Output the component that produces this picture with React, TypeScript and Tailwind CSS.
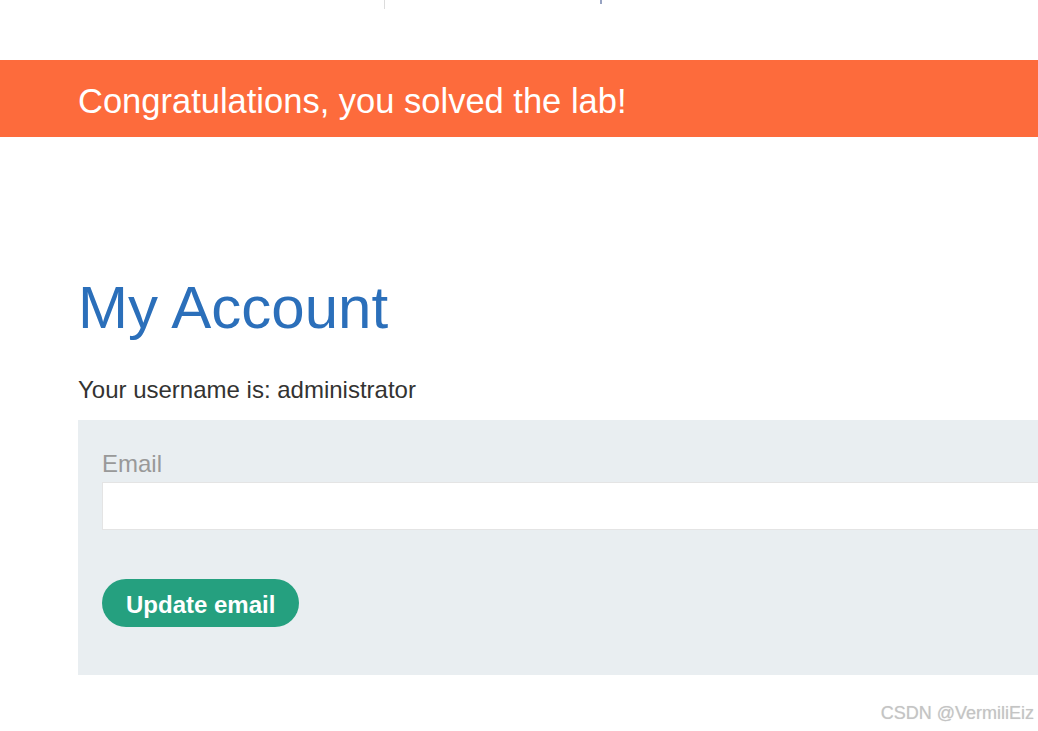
import React from 'react';

export default function App() {
  return (
    <div className="relative min-h-[731px] w-full overflow-hidden bg-white font-['Liberation_Sans',Arial,sans-serif]">
      {/* Rest des Headers oben */}
      <div className="flex h-[60px] items-start">
        <div className="ml-[384px] h-[9px] border-l border-[#dcdcdc]" />
        <div className="ml-[215px] h-[4px] w-[2px] bg-[#97a3c2]" />
      </div>

      {/* Lab-solved Banner */}
      <div className="flex h-[77px] items-center bg-[#fd6b3c] pl-[78px] pt-[4px]">
        <h4 className="whitespace-nowrap text-[34.5px] leading-[40px] text-white">
          Congratulations, you solved the lab!
        </h4>
      </div>

      <div className="w-[1200px] pl-[78px]">
        <h1 className="mt-[141px] text-[60px] leading-[60px] text-[#2b6fba]">My Account</h1>
        <p className="mt-[40px] text-[24px] leading-[24px] text-[#333332]">
          Your username is: administrator
        </p>

        {/* Formular */}
        <div className="mt-[18px] bg-[#e9eef1] px-[24px] pb-[48px] pt-[32px]">
          <label className="block text-[24px] leading-[24px] text-[#999999]">Email</label>
          <input
            type="email"
            className="mt-[6px] block h-[48px] w-full border border-[#e4e4e4] bg-white outline-none"
          />
          <button className="mt-[49px] flex h-[48px] items-center rounded-full bg-[#25a07f] px-[24px] pt-[3px] text-[24px] font-bold leading-[24px] text-white">
            Update email
          </button>
        </div>
      </div>

      {/* Wasserzeichen */}
      <div className="absolute right-[4px] top-[704px] whitespace-nowrap text-[18px] leading-[18px] text-[#c4c4c4] [text-shadow:0_0_1px_rgba(0,0,0,0.15)]">
        CSDN @VermiliEiz
      </div>
    </div>
  );
}
